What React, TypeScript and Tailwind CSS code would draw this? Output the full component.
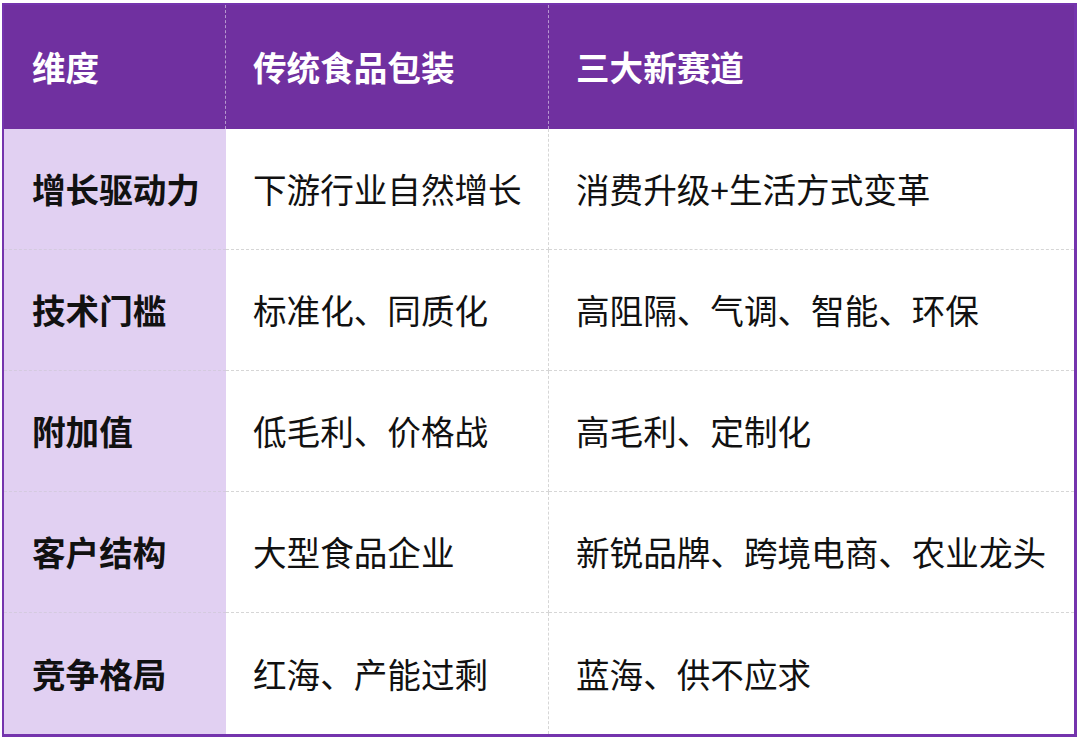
import React from 'react';

const rows: [string, string, string][] = [
  ['增长驱动力', '下游行业自然增长', '消费升级+生活方式变革'],
  ['技术门槛', '标准化、同质化', '高阻隔、气调、智能、环保'],
  ['附加值', '低毛利、价格战', '高毛利、定制化'],
  ['客户结构', '大型食品企业', '新锐品牌、跨境电商、农业龙头'],
  ['竞争格局', '红海、产能过剩', '蓝海、供不应求'],
];

const font = { fontFamily: '"Noto Sans CJK SC", "Noto Sans", sans-serif' };

export default function App() {
  return (
    <div className="w-[1080px] h-[741px] bg-white pt-[3px] pl-[2px]" style={font}>
      <div className="w-[1075px] border-[3px] border-t-2 border-l-2 border-[#7434ad] grid grid-cols-[222px_323px_1fr] grid-rows-[124px_repeat(5,121px)] text-[33.6px] leading-none">
        {/* Header */}
        <div className="bg-[#7030a0] text-white font-bold flex items-center pl-[28px] border-r border-dashed border-white/50">维度</div>
        <div className="bg-[#7030a0] text-white font-bold flex items-center pl-[27px] border-r border-dashed border-white/50">传统食品包装</div>
        <div className="bg-[#7030a0] text-white font-bold flex items-center pl-[27px]">三大新赛道</div>

        {rows.map(([label, a, b], i) => {
          const last = i === rows.length - 1;
          return (
            <React.Fragment key={label}>
              <div className={`bg-[#e1d0f2] text-[#111] font-bold flex items-center pl-[28px] ${last ? '' : 'border-b border-dashed border-[#d4cadf]'}`}>
                {label}
              </div>
              <div className={`bg-white text-[#111] flex items-center pl-[27px] border-r border-dashed border-[#d6d6d6] ${last ? '' : 'border-b'}`}>
                {a}
              </div>
              <div className={`bg-white text-[#111] flex items-center pl-[27px] ${last ? '' : 'border-b border-dashed border-[#d6d6d6]'}`}>
                {b}
              </div>
            </React.Fragment>
          );
        })}
      </div>
    </div>
  );
}
